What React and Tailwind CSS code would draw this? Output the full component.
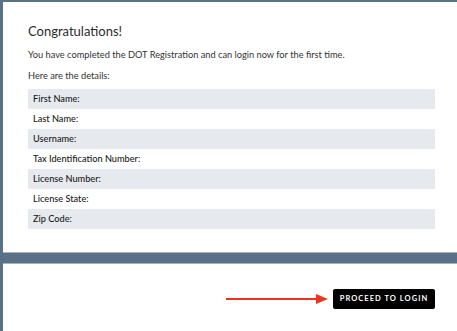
import React from 'react';

const rows = [
  'First Name:',
  'Last Name:',
  'Username:',
  'Tax Identification Number:',
  'License Number:',
  'License State:',
  'Zip Code:',
];

export default function App() {
  return (
    <div className="min-h-[331px] h-[331px] bg-[#5a7288] pt-[2px] pl-[3px] flex flex-col gap-[10px] overflow-hidden font-['Lato',sans-serif] text-[#333]">
      <div className="h-[251px] bg-white border-b border-[#a9b1b9] pl-[25px] pr-[22px] pt-[21px]">
        <h1 className="text-[13px] leading-[16px] text-[#2b2b2b]">Congratulations!</h1>
        <p className="mt-[10px] text-[9.25px] leading-[12px]">
          You have completed the DOT Registration and can login now for the first time.
        </p>
        <p className="mt-[9px] text-[9.25px] leading-[12px]">Here are the details:</p>
        <div className="mt-[7px] flex flex-col">
          {rows.map((r, i) => (
            <div
              key={r}
              className={`h-[20px] flex items-center px-[5px] text-[9.2px] font-medium text-[#1a1a1a] ${i % 2 === 0 ? 'bg-[#e6e9ed]' : 'bg-white'}`}
            >
              {r}
            </div>
          ))}
        </div>
      </div>
      <div className="flex-1 bg-white border-t border-[#a9b1b9] flex items-start justify-end pr-[22px] pt-[25px]">
        <div className="flex items-center">
          <svg width="103" height="12" viewBox="0 0 103 12" className="mr-[4px]">
            <line x1="0" y1="6" x2="91" y2="6" stroke="#f0321e" strokeWidth="2" />
            <polygon points="90,1 102,6 90,11" fill="#f0321e" />
          </svg>
          <button className="h-[20px] w-[102px] bg-black rounded-[2px] text-white text-[7.5px] font-bold tracking-[0.14em] flex items-center justify-center">
            PROCEED TO LOGIN
          </button>
        </div>
      </div>
    </div>
  );
}
